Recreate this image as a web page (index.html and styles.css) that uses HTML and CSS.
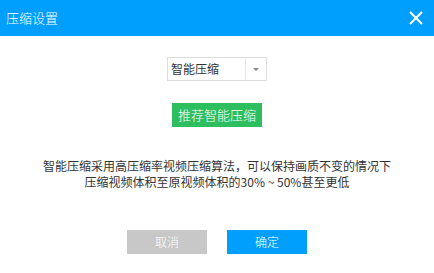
FILE: index.html
```html
<!DOCTYPE html>
<html lang="zh">
<head>
<meta charset="utf-8">
<link rel="stylesheet" href="styles.css">
</head>
<body>
<div class="dialog">
  <div class="header">
    <span class="title">压缩设置</span>
    <span class="close">
      <svg width="14" height="14" viewBox="0 0 14 14"><path d="M1 1L13 13M13 1L1 13" stroke="#fff" stroke-width="2" fill="none"/></svg>
    </span>
  </div>
  <div class="body">
    <div class="select">
      <span class="select-text">智能压缩</span>
      <span class="select-arrow"><span class="tri"></span></span>
    </div>
    <div class="recommend">推荐智能压缩</div>
    <div class="desc">智能压缩采用高压缩率视频压缩算法，可以保持画质不变的情况下<br>压缩视频体积至原视频体积的30% ~ 50%甚至更低</div>
    <div class="actions">
      <div class="btn cancel">取消</div>
      <div class="btn ok">确定</div>
    </div>
  </div>
</div>
</body>
</html>
```

FILE: styles.css
```css
html, body { margin: 0; padding: 0; background: #fff; }
body { font-family: "Noto Sans CJK SC", "Microsoft YaHei", sans-serif; width: 434px; height: 273px; overflow: hidden; }
.dialog { width: 434px; height: 273px; display: flex; flex-direction: column; }
.header { height: 36px; background: #009ffe; display: flex; align-items: center; justify-content: space-between; padding: 0 11px 0 6px; }
.title { color: #fff; font-size: 13px; line-height: 36px; font-weight: 300; }
.close { display: flex; width: 14px; height: 14px; }
.body { display: flex; flex-direction: column; align-items: center; }
.select { margin-top: 21px; width: 100px; height: 24px; box-sizing: border-box; border: 1px solid #ddd; display: flex; }
.select-text { flex: 1; font-size: 12px; color: #333; line-height: 22px; padding-left: 3px; border-right: 1px solid #e6e6e6; }
.select-arrow { width: 20px; display: flex; align-items: center; justify-content: center; }
.tri { width: 0; height: 0; border-left: 3px solid transparent; border-right: 3px solid transparent; border-top: 3px solid #888; }
.recommend { margin-top: 22px; width: 90px; height: 24px; background: #2dbe60; color: #fff; font-size: 13px; line-height: 24px; text-align: center; font-weight: 300; }
.desc { margin-top: 31px; font-size: 12px; line-height: 16px; color: #333; text-align: center; }
.actions { margin-top: 40px; display: flex; gap: 20px; }
.btn { width: 80px; height: 24px; font-size: 12px; line-height: 24px; text-align: center; color: #fff; font-weight: 300; }
.cancel { background: #c8c8c8; }
.ok { background: #009ffe; }
```
